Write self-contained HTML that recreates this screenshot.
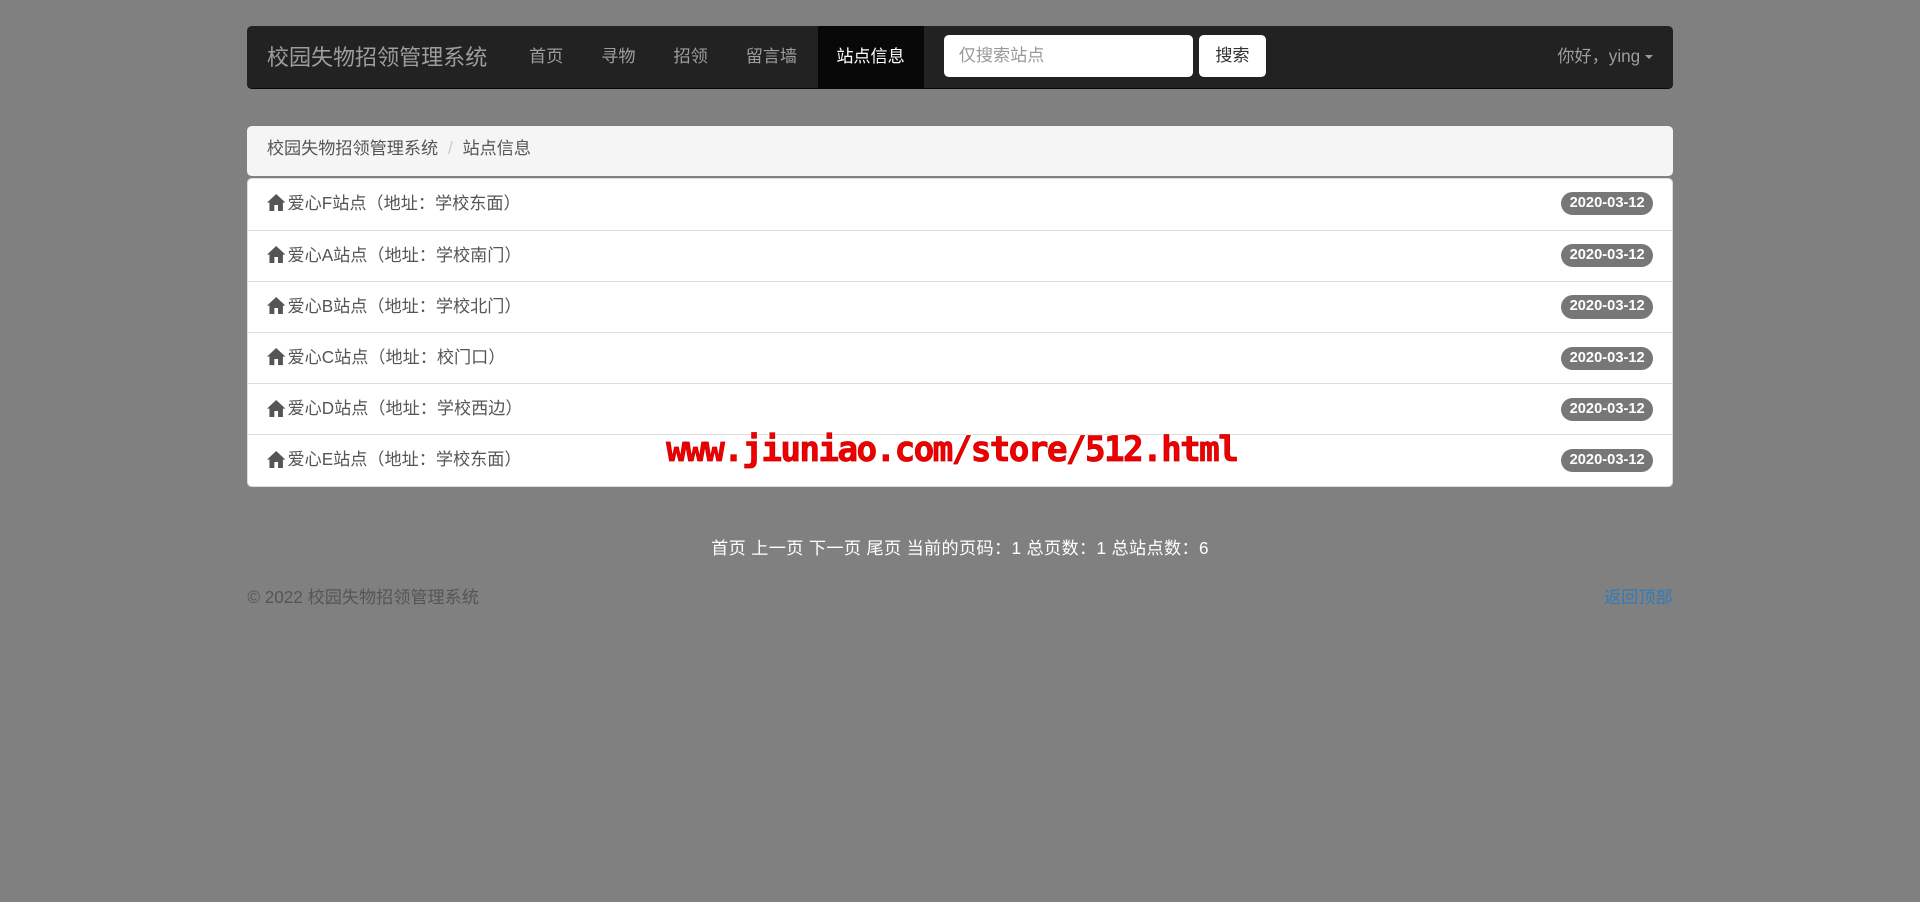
<!DOCTYPE html>
<html><head><meta charset="utf-8"><style>
html,body{margin:0;padding:0;}
body{width:1568px;height:737px;background:#808080;zoom:1.2245;font-family:"Liberation Sans","Noto Sans CJK SC",sans-serif;font-size:14px;color:#333;position:relative;overflow:hidden;}
.nav{position:absolute;left:202px;top:21px;width:1164px;height:52px;background:#222;border-radius:4px;border-bottom:1px solid #080808;box-sizing:border-box;}
.brand{position:absolute;left:16px;top:12px;font-size:18px;color:#9d9d9d;}
.ni{position:absolute;top:0;height:51px;line-height:50px;color:#9d9d9d;font-size:14px;}
.act{background:#080808;color:#fff;padding:0 15px;}
.inp{position:absolute;left:569px;top:8px;width:203px;height:34px;background:#fff;border-radius:4px;box-sizing:border-box;padding:0 12px;line-height:34px;color:#999;}
.btn{position:absolute;left:777px;top:8px;width:55px;height:34px;background:#fff;border-radius:4px;line-height:34px;text-align:center;color:#333;}
.user{position:absolute;right:16px;top:0;line-height:50px;color:#9d9d9d;}
.car{display:inline-block;border-top:4px solid #9d9d9d;border-left:4px solid transparent;border-right:4px solid transparent;vertical-align:middle;margin-left:4px;}
.bc{position:absolute;left:202px;top:103px;width:1164px;height:41px;background:#f5f5f5;border-radius:4px;box-sizing:border-box;padding-left:16px;line-height:36px;color:#555;}
.bc span{color:#ccc;padding:0 8px;}
.list{position:absolute;left:202px;top:145px;width:1164px;background:#fff;border-radius:4px;border:1px solid #ddd;box-sizing:border-box;}
.it{height:41.8px;border-top:1px solid #ddd;box-sizing:border-box;position:relative;padding-left:15px;line-height:40px;color:#555;}
.it:first-child{border-top:none;}
.ic{display:inline-block;vertical-align:-2px;margin-right:2px;}
.bd{position:absolute;right:15px;top:11px;background:#777;color:#fff;font-weight:bold;font-size:12px;line-height:19px;padding:0 7px;border-radius:10px;}
.wm{position:absolute;left:544px;top:351px;font-size:28px;font-weight:bold;font-family:"DejaVu Sans Mono","Liberation Mono",monospace;color:#e00;-webkit-text-stroke:0.6px #c00;text-shadow:1px 1px 0 #fff,-1px -1px 0 #fff,1px -1px 0 #fff,-1px 1px 0 #fff;letter-spacing:-1.3px;}
.pg{position:absolute;left:0;width:1568px;top:436px;text-align:center;color:#fff;font-size:14px;letter-spacing:0.3px;}
.ft{position:absolute;left:202px;top:476px;color:#555;}
.top{position:absolute;right:202px;top:476px;color:#337ab7;}
</style></head><body>
<div class="nav">
<div class="brand">校园失物招领管理系统</div>
<div class="ni" style="left:230px">首页</div>
<div class="ni" style="left:289px">寻物</div>
<div class="ni" style="left:348px">招领</div>
<div class="ni" style="left:407px">留言墙</div>
<div class="ni act" style="left:466px;width:57px">站点信息</div>
<div class="inp">仅搜索站点</div>
<div class="btn">搜索</div>
<div class="user">你好，ying<span class="car"></span></div>
</div>
<div class="bc">校园失物招领管理系统<span>/</span>站点信息</div>
<div class="list">
<div class="it"><svg class="ic" width="15" height="14" viewBox="0 0 15 14"><path d="M7.5 0L0 7h2v7h4V9h3v5h4V7h2z" fill="#555"/></svg>爱心F站点（地址：学校东面）<span class="bd">2020-03-12</span></div>
<div class="it"><svg class="ic" width="15" height="14" viewBox="0 0 15 14"><path d="M7.5 0L0 7h2v7h4V9h3v5h4V7h2z" fill="#555"/></svg>爱心A站点（地址：学校南门）<span class="bd">2020-03-12</span></div>
<div class="it"><svg class="ic" width="15" height="14" viewBox="0 0 15 14"><path d="M7.5 0L0 7h2v7h4V9h3v5h4V7h2z" fill="#555"/></svg>爱心B站点（地址：学校北门）<span class="bd">2020-03-12</span></div>
<div class="it"><svg class="ic" width="15" height="14" viewBox="0 0 15 14"><path d="M7.5 0L0 7h2v7h4V9h3v5h4V7h2z" fill="#555"/></svg>爱心C站点（地址：校门口）<span class="bd">2020-03-12</span></div>
<div class="it"><svg class="ic" width="15" height="14" viewBox="0 0 15 14"><path d="M7.5 0L0 7h2v7h4V9h3v5h4V7h2z" fill="#555"/></svg>爱心D站点（地址：学校西边）<span class="bd">2020-03-12</span></div>
<div class="it"><svg class="ic" width="15" height="14" viewBox="0 0 15 14"><path d="M7.5 0L0 7h2v7h4V9h3v5h4V7h2z" fill="#555"/></svg>爱心E站点（地址：学校东面）<span class="bd">2020-03-12</span></div>
</div>
<div class="wm">www.jiuniao.com/store/512.html</div>
<div class="pg">首页 上一页 下一页 尾页 当前的页码：1 总页数：1 总站点数：6</div>
<div class="ft">© 2022 校园失物招领管理系统</div>
<div class="top">返回顶部</div>
</body></html>
